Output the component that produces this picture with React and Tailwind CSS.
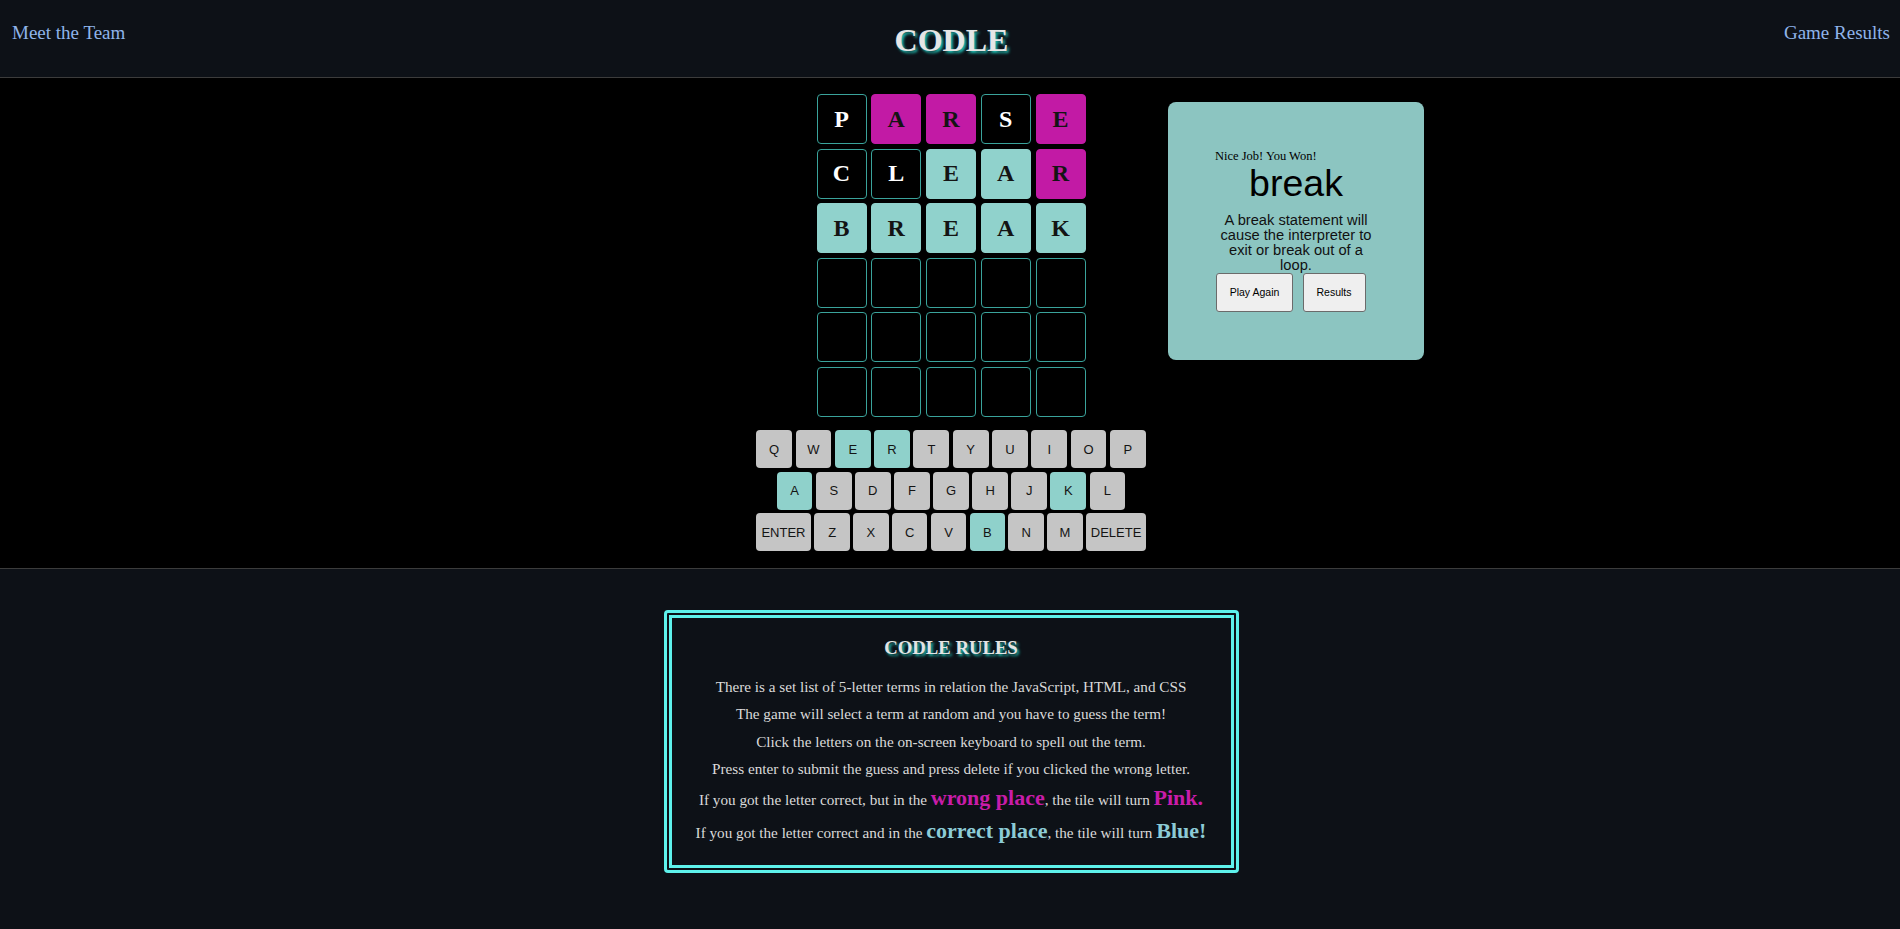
import React from "react";

const SERIF = "font-['Liberation_Serif',_'Times_New_Roman',_serif]";
const SANS = "font-['Liberation_Sans',_Arial,_sans-serif]";

const rows = [
  [
    ["P", "x"], ["A", "p"], ["R", "p"], ["S", "x"], ["E", "p"],
  ],
  [
    ["C", "x"], ["L", "x"], ["E", "t"], ["A", "t"], ["R", "p"],
  ],
  [
    ["B", "t"], ["R", "t"], ["E", "t"], ["A", "t"], ["K", "t"],
  ],
  [["", "e"], ["", "e"], ["", "e"], ["", "e"], ["", "e"]],
  [["", "e"], ["", "e"], ["", "e"], ["", "e"], ["", "e"]],
  [["", "e"], ["", "e"], ["", "e"], ["", "e"], ["", "e"]],
];

function Tile({ letter, kind }) {
  let cls = "";
  if (kind === "p") cls = "bg-[#c21aa5] border-[#c21aa5] text-[#141414]";
  else if (kind === "t") cls = "bg-[#90d2cc] border-[#90d2cc] text-[#141414]";
  else cls = "bg-black border-[#3aa39b] text-white";
  return (
    <div
      className={`w-[50px] h-[50px] rounded-[4px] border flex items-center justify-center text-[24px] font-bold ${SERIF} ${cls}`}
    >
      {letter}
    </div>
  );
}

const teal = new Set(["E", "R", "A", "K", "B"]);

function Key({ label, w = "w-[35.8px]" }) {
  const bg = teal.has(label) ? "bg-[#8fd1cb]" : "bg-[#c5c5c5]";
  return (
    <div
      className={`${w} h-[38px] rounded-[4px] flex items-center justify-center text-[13px] text-[#141414] ${SANS} ${bg}`}
    >
      {label}
    </div>
  );
}

export default function App() {
  return (
    <div className={`min-h-screen bg-[#0d1117] leading-[normal] ${SERIF}`}>
      {/* Header */}
      <header className="h-[78px] border-b border-[#3c3c3c] grid grid-cols-3 items-start pt-[22px] bg-[#0d1117]">
        <div className="pl-[12px] text-[19px] text-[#8fb4ea]">Meet the Team</div>
        <div className="text-center pl-[3px]">
          <span className="text-[32px] font-bold text-[#e6e6e6] [text-shadow:2px_2px_3px_#1fc4b8]">
            CODLE
          </span>
        </div>
        <div className="text-right pr-[10px] text-[19px] text-[#8fb4ea]">Game Results</div>
      </header>

      {/* Game */}
      <main className="bg-black border-b border-[#3c3c3c] grid grid-cols-[1fr_auto_1fr] pt-[16px] pb-[17px]">
        <div />
        <div className="flex flex-col items-center w-[390px] ml-[2px]">
          <div className="flex flex-col gap-[4.5px]">
            {rows.map((r, i) => (
              <div key={i} className="flex gap-[4.75px]">
                {r.map(([l, k], j) => (
                  <Tile key={j} letter={l} kind={k} />
                ))}
              </div>
            ))}
          </div>
          <div className="mt-[13.5px] flex flex-col gap-[3.5px] items-center">
            <div className="flex gap-[3.5px]">
              {"QWERTYUIOP".split("").map((c) => (
                <Key key={c} label={c} />
              ))}
            </div>
            <div className="flex gap-[3.5px]">
              {"ASDFGHJKL".split("").map((c) => (
                <Key key={c} label={c} w="w-[35.6px]" />
              ))}
            </div>
            <div className="flex gap-[3.5px]">
              <Key label="ENTER" w="w-[55px]" />
              {"ZXCVBNM".split("").map((c) => (
                <Key key={c} label={c} w="w-[35.3px]" />
              ))}
              <Key label="DELETE" w="w-[60px]" />
            </div>
          </div>
        </div>
        <div>
          <div className="ml-[22px] mt-[8px] w-[256px] h-[258px] rounded-[8px] bg-[#8cc5c1] pt-[47px] pl-[47px]">
            <div className="w-[162px] text-black">
              <div className={`text-[12.5px] leading-[14px] text-left ${SERIF}`}>Nice Job! You Won!</div>
              <div className={`text-[37.5px] leading-[40px] text-center ${SANS}`}>break</div>
              <div className={`mt-[9.5px] text-[14.7px] leading-[15px] text-center text-[#111] ${SANS}`}>
                A break statement will cause the interpreter to exit or break out of a loop.
              </div>
              <div className="flex gap-[9.5px] ml-[1px]">
                <button
                  className={`w-[77px] h-[39px] bg-[#efefef] border border-[#6b6b6b] rounded-[3px] text-[10.5px] text-black ${SANS}`}
                >
                  Play Again
                </button>
                <button
                  className={`w-[63px] h-[39px] bg-[#efefef] border border-[#6b6b6b] rounded-[3px] text-[10.5px] text-black ${SANS}`}
                >
                  Results
                </button>
              </div>
            </div>
          </div>
        </div>
      </main>

      {/* Rules */}
      <section className="pt-[41px] pb-[56px] bg-[#0d1117] flex justify-center pl-[2px]">
        <div className="w-[575px] border-[8px] border-double border-[#5ef2ec] rounded-[4px] px-[16px] pt-[19px] pb-[20.6px] text-center text-[#dadada]">
          <h3 className="text-[18.72px] font-bold text-[#e4e4e4] [text-shadow:2px_2px_3px_#1fc4b8]">
            CODLE RULES
          </h3>
          <div className="mt-[19.2px] flex flex-col gap-[9.2px] text-[15.2px]">
            <p>There is a set list of 5-letter terms in relation the JavaScript, HTML, and CSS</p>
            <p>The game will select a term at random and you have to guess the term!</p>
            <p>Click the letters on the on-screen keyboard to spell out the term.</p>
            <p>Press enter to submit the guess and press delete if you clicked the wrong letter.</p>
            <p className="-mt-[2px]">
              If you got the letter correct, but in the{" "}
              <span className="text-[22px] font-bold text-[#c81ca9]">wrong place</span>, the tile will turn{" "}
              <span className="text-[22px] font-bold text-[#c81ca9]">Pink.</span>
            </p>
            <p className="-mt-[1.8px]">
              If you got the letter correct and in the{" "}
              <span className="text-[22px] font-bold text-[#8ccbd6]">correct place</span>, the tile will turn{" "}
              <span className="text-[22px] font-bold text-[#8ccbd6]">Blue!</span>
            </p>
          </div>
        </div>
      </section>
    </div>
  );
}
